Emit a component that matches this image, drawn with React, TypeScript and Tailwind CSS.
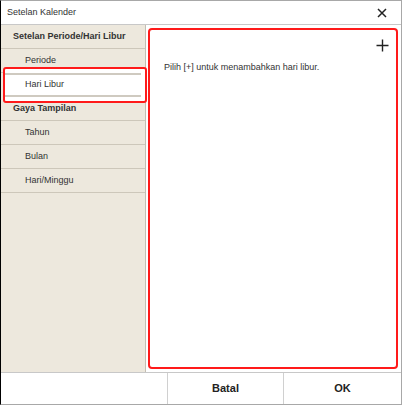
import React from "react";

const font = { fontFamily: '"Liberation Sans", Arial, sans-serif' };

function Row({ label, bold, indent }: { label: string; bold?: boolean; indent?: boolean }) {
  return (
    <div
      className={`h-[24px] flex items-center border-b border-[#cdc7ba] text-[9px] text-[#333] ${
        bold ? "font-bold pl-[12px]" : "pl-[24px]"
      }`}
    >
      {label}
    </div>
  );
}

export default function App() {
  return (
    <div
      style={font}
      className="w-[402px] h-[405px] flex flex-col bg-white border border-[#a8a8a8] border-l-black overflow-hidden"
    >
      {/* Title bar */}
      <div className="h-[24px] shrink-0 flex items-center justify-between pl-[6px] pr-[14px] border-b border-[#c8c8c8]">
        <span className="text-[9px] text-[#333]">Setelan Kalender</span>
        <svg width="10" height="10" viewBox="0 0 10 10">
          <path d="M1 1 L9 9 M9 1 L1 9" stroke="#222" strokeWidth="1.5" />
        </svg>
      </div>

      {/* Content */}
      <div className="flex-1 flex min-h-0">
        {/* Sidebar */}
        <div className="w-[145px] shrink-0 bg-[#ede8dd] border-r border-[#c4beb2] flex flex-col">
          <Row label="Setelan Periode/Hari Libur" bold />
          <Row label="Periode" />
          <div className="relative h-[24px]">
            <div className="absolute -top-[6px] -bottom-[6px] left-[2px] -right-[2px] border-2 border-[#ff1a1a] rounded-[3px] bg-white" />
            <div className="relative h-full mx-[4px] border-y-2 border-[#cfcac0] flex items-center pl-[20px] text-[9px] text-[#333]">
              Hari Libur
            </div>
          </div>
          <Row label="Gaya Tampilan" bold />
          <Row label="Tahun" />
          <Row label="Bulan" />
          <Row label="Hari/Minggu" />
        </div>

        {/* Right panel */}
        <div className="flex-1 bg-white pt-[3px] pl-[2px] pr-[3px] pb-[3px] flex">
          <div className="flex-1 border-2 border-[#ff1a1a] rounded-[4px] flex flex-col">
            <div className="flex justify-end pr-[7px] pt-[9px]">
              <svg width="13" height="13" viewBox="0 0 13 13">
                <path d="M6.5 0.5 V12.5 M0.5 6.5 H12.5" stroke="#222" strokeWidth="1.4" />
              </svg>
            </div>
            <div className="pl-[14px] pt-[9px] text-[9px] text-[#333]">
              Pilih [+] untuk menambahkan hari libur.
            </div>
          </div>
        </div>
      </div>

      {/* Bottom bar */}
      <div className="h-[32px] shrink-0 flex border-t border-[#c8c8c8]">
        <div className="w-[166px] shrink-0" />
        <div className="w-[116px] shrink-0 border-l border-[#d0d0d0] flex items-center justify-center text-[11px] font-bold text-[#222]">
          Batal
        </div>
        <div className="flex-1 border-l border-[#d0d0d0] flex items-center justify-center text-[11px] font-bold text-[#222]">
          OK
        </div>
      </div>
    </div>
  );
}
